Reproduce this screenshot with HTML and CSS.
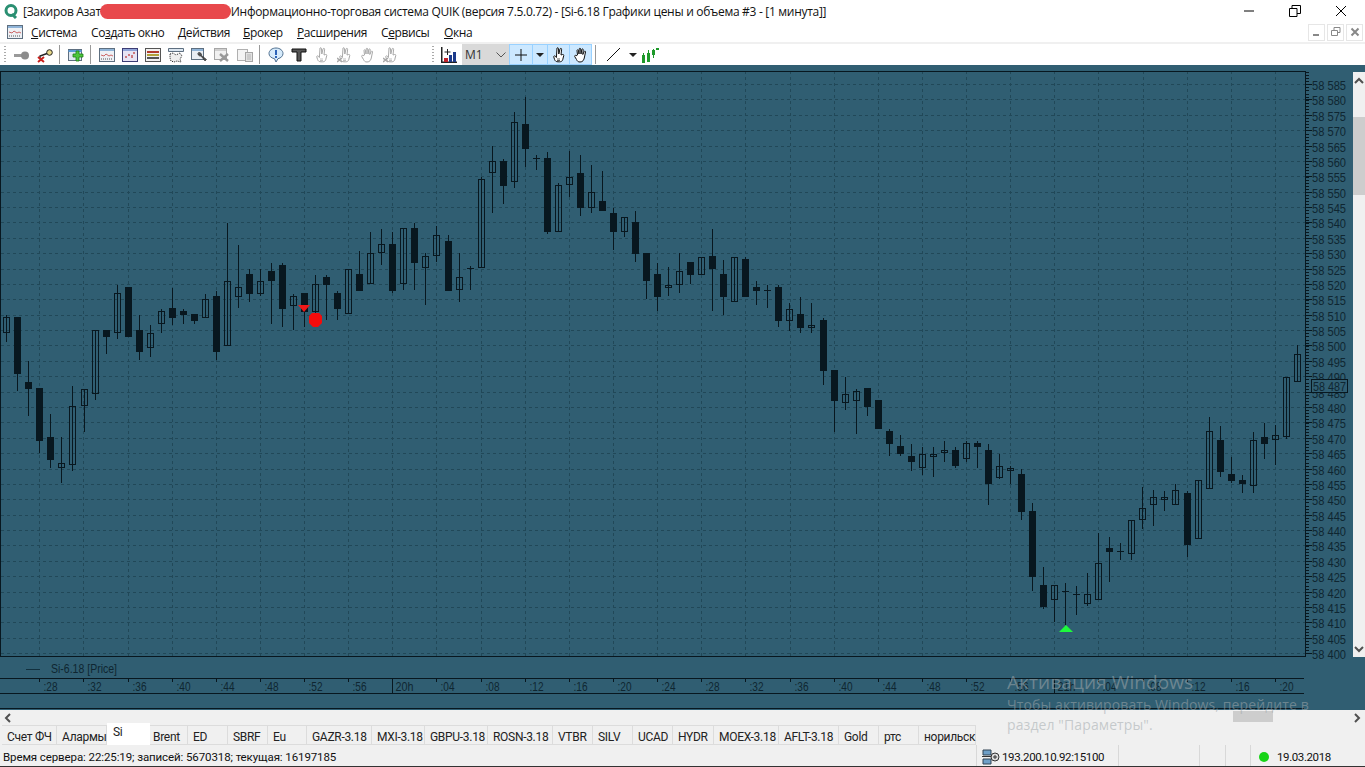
FILE: index.html
```html
<!DOCTYPE html>
<html lang="ru">
<head>
    <meta charset="UTF-8">
    <title>QUIK - Si-6.18 Графики цены и объема</title>
    <link rel="stylesheet" href="styles.css">
</head>
<body>
    <svg class="icon-defs" width="0" height="0">
        <symbol id="i-key" viewBox="0 0 16 16">
            <path d="M0 7h8v3H0z" fill="#9a9a9a"/><circle cx="11" cy="8.5" r="4" fill="#8c8c8c"/>
        </symbol>
        <symbol id="i-key-x" viewBox="0 0 16 16">
            <circle cx="12.500" cy="5.500" r="2.800" fill="#e8d98a" stroke="#222"/>
            <path d="M10 6.500 3 9v2" fill="none" stroke="#222" stroke-width="1.400"/>
            <path d="M1 10l6 5M7 10l-6 5" stroke="#c9201c" stroke-width="2"/>
        </symbol>
        <symbol id="i-add" viewBox="0 0 16 16">
            <rect x=".5" y="2.500" width="13" height="11" fill="#dfe8f2" stroke="#5e6f80"/>
            <path d="M.5 3h13v2H.5z" fill="#5a9bd8"/>
            <path d="M8 4h3v3h4v3h-4v4H8v-4H5V7h3z" fill="#4cc63c" stroke="#1c7d18" stroke-width=".8"/>
        </symbol>
        <symbol id="i-win-chart" viewBox="0 0 16 16">
            <rect x=".5" y="1.500" width="15" height="13" fill="#eef1f5" stroke="#5e6f80"/>
            <path d="M1 2h14v2H1z" fill="#8fb4d8"/>
            <path d="M2 8l3 1 2-2 3 2 2-1 2 1" fill="none" stroke="#c66"/>
            <path d="M2 12h12" stroke="#555" stroke-dasharray="1 1"/>
        </symbol>
        <symbol id="i-win-dots" viewBox="0 0 16 16">
            <rect x=".5" y="1.500" width="15" height="13" fill="#e7e4f3" stroke="#3d3d74"/>
            <path d="M1 2h14v2H1z" fill="#8fa4d8"/>
            <path d="M4 11V9M7 9V7M10 11V8M12 7V5" stroke="#b33" stroke-width="1.200"/>
        </symbol>
        <symbol id="i-win-list" viewBox="0 0 16 16">
            <rect x=".5" y="1.500" width="15" height="13" fill="#f2f2f2" stroke="#555"/>
            <path d="M2 4h12v2H2z" fill="#b23b2e"/><path d="M2 7h12v2H2z" fill="#b2a23b"/><path d="M2 10h12v2H2z" fill="#555"/>
        </symbol>
        <symbol id="i-win-map" viewBox="0 0 16 16">
            <path d="M.5 1.500h15v3H.5z" fill="#dbe6f0" stroke="#5e6f80"/>
            <path d="M2 7l3-1 3 2 4-2 2 3-2 3 1 3-4-1-3 1-3-1-1-3z" fill="#eee" stroke="#222" stroke-dasharray="1 1"/>
        </symbol>
        <symbol id="i-win-tool" viewBox="0 0 16 16">
            <rect x=".5" y="1.500" width="12" height="11" fill="#e9eef4" stroke="#5e6f80"/>
            <path d="M1 2h11v2H1z" fill="#8fb4d8"/>
            <path d="M7 6a2.500 2.500 0 0 0 3 3l4 5 1.500-1.500-5-4a2.500 2.500 0 0 0-3-3l1.500 1.500-1 1z" fill="#555" stroke="#222" stroke-width=".6"/>
        </symbol>
        <symbol id="i-win-x" viewBox="0 0 16 16">
            <rect x=".5" y="1.500" width="12" height="11" fill="#f1f1f1" stroke="#a6a6a6"/>
            <path d="M1 2h11v2H1z" fill="#cfcfcf"/>
            <path d="M6 7l8 7M14 7l-8 7" stroke="#999" stroke-width="2.400"/>
        </symbol>
        <symbol id="i-win-copy" viewBox="0 0 16 16">
            <rect x=".5" y="2.500" width="10" height="11" fill="#f4f4f4" stroke="#b0b0b0"/>
            <rect x="8.500" y="5.500" width="7" height="9" fill="#e2e2e2" stroke="#a6a6a6"/>
            <path d="M10 8h4M10 10h4M10 12h4" stroke="#b5b5b5"/>
        </symbol>
        <symbol id="i-alert" viewBox="0 0 16 16">
            <path d="M8 1c4 0 7 2.500 7 5.500 0 2.500-2 4.500-5 5.200L8 15l-1.500-3.300C3 11 1 9 1 6.500 1 3.500 4 1 8 1z" fill="#d5eafb" stroke="#4f6f8f"/>
            <path d="M7 3h2v5H7zM7 9h2v2H7z" fill="#2a62b8"/>
        </symbol>
        <symbol id="i-text" viewBox="0 0 16 16">
            <path d="M1 2h14v3h-5v9H6V5H1z" fill="#555" stroke="#111"/>
        </symbol>
        <symbol id="i-hand" viewBox="0 0 16 16">
            <path d="M6 1c1-.6 1.500 0 1.500 1l.3 5 1.200-5c.3-1 1.700-.8 1.600.3L10 8l1.500-.5c1-.3 1.500.5 1.200 1.300l-1 4c-.5 1.400-1.500 2-3 2H7c-1.800 0-3-.8-3.500-2.500L2.800 10c-.3-1 1-1.700 1.600-.8l1 1.300z" fill="#fff" stroke="currentColor"/>
            <path d="M6 12h3M6 13.500h3" stroke="currentColor" stroke-width=".7"/>
        </symbol>
        <symbol id="i-palm" viewBox="0 0 16 16">
            <path d="M4.500 8 4 3.500c0-1 1.400-1 1.500 0L6 7l.2-5c0-1 1.500-1 1.500 0L8 7l.8-4.500c.2-1 1.500-.8 1.400.2L9.800 7.500l1.400-3c.4-.9 1.600-.4 1.300.5L11.500 10c-.5 3-1.600 5-4.500 5-2 0-2.800-1-3.500-2.500L1.700 9.500c-.4-1 .8-1.600 1.400-.8z" fill="#fff" stroke="currentColor"/>
        </symbol>
        <symbol id="i-hand-x" viewBox="0 0 16 16">
            <use href="#i-hand" width="16" height="16"/>
            <path d="M0 11l5 4M5 11l-5 4" stroke="currentColor" stroke-width="1.500"/>
        </symbol>
        <symbol id="i-bars" viewBox="0 0 16 16">
            <path d="M.75 0v15.250H16" fill="none" stroke="#222" stroke-width="1.500"/>
            <path d="M3 11h4v4H3z" fill="#c0222a"/><path d="M8 8h3v7H8z" fill="#1c3a8a"/><path d="M12 5h3v10h-3z" fill="#1c3a8a"/>
            <path d="M6.500 2v6M3.500 5h6" stroke="#222"/>
        </symbol>
        <symbol id="i-candles" viewBox="0 0 18 16">
            <path d="M0 8h3v8H0zM5 6h3v9H5zM10 3h3v5h-3zM14 1h3v2h-3z" fill="#1d9a2a"/>
            <path d="M1.500 6v10M6.500 3v12M11.500 2v9" stroke="#1d9a2a"/>
        </symbol>
    </svg>

    <header class="titlebar">
        <svg class="logo" width="16" height="16" viewBox="0 0 16 16">
            <circle cx="8" cy="7.500" r="5" fill="none" stroke="#2a8f72" stroke-width="3"/>
            <path d="M9 11l4 4" stroke="#2a8f72" stroke-width="3"/>
        </svg>
        <span class="title-text">[Закиров Азат</span>
        <span class="redacted"></span>
        <span class="title-text">Информационно-торговая система QUIK (версия 7.5.0.72) - [Si-6.18 Графики цены и объема #3 - [1 минута]]</span>
        <div class="win-controls">
            <svg width="12" height="12" viewBox="0 0 12 12"><path d="M1 6h10" stroke="#000"/></svg>
            <svg width="12" height="12" viewBox="0 0 12 12"><path d="M.5 3.500h7.500v8H.5zM3 3V.5h8.500v8H8" fill="none" stroke="#000"/></svg>
            <svg width="12" height="12" viewBox="0 0 12 12"><path d="M1 1l10 10M11 1 1 11" stroke="#000"/></svg>
        </div>
    </header>

    <nav class="menubar">
        <svg class="menu-icon" width="16" height="16"><use href="#i-win-chart"/></svg>
        <span class="menu-item m1"><u>С</u>истема</span>
        <span class="menu-item m2">Со<u>з</u>дать окно</span>
        <span class="menu-item m3"><u>Д</u>ействия</span>
        <span class="menu-item m4"><u>Б</u>рокер</span>
        <span class="menu-item m5"><u>Р</u>асширения</span>
        <span class="menu-item m6">С<u>е</u>рвисы</span>
        <span class="menu-item"><u>О</u>кна</span>
        <div class="mdi-controls">
            <span class="mdi-btn">
                <svg width="10" height="10" viewBox="0 0 10 10"><path d="M1 8h6" stroke="#888" stroke-width="2"/></svg>
            </span>
            <span class="mdi-btn">
                <svg width="10" height="10" viewBox="0 0 10 10"><path d="M.5 3.500h6v5h-6zM3 3V.5h6v5H7" fill="none" stroke="#888"/></svg>
            </span>
            <span class="mdi-btn">
                <svg width="10" height="10" viewBox="0 0 10 10"><path d="M1.500 1.500l7 7M8.500 1.500l-7 7" stroke="#888" stroke-width="2"/></svg>
            </span>
        </div>
    </nav>

    <div class="toolbar">
        <span class="grip"></span>
        <span class="tool"><svg width="16" height="16"><use href="#i-key"/></svg></span>
        <span class="tool"><svg width="16" height="16"><use href="#i-key-x"/></svg></span>
        <span class="sep"></span>
        <span class="tool"><svg width="16" height="16"><use href="#i-add"/></svg></span>
        <span class="sep"></span>
        <span class="tool"><svg width="16" height="16"><use href="#i-win-chart"/></svg></span>
        <span class="tool"><svg width="16" height="16"><use href="#i-win-dots"/></svg></span>
        <span class="tool"><svg width="16" height="16"><use href="#i-win-list"/></svg></span>
        <span class="tool"><svg width="16" height="16"><use href="#i-win-map"/></svg></span>
        <span class="tool"><svg width="16" height="16"><use href="#i-win-tool"/></svg></span>
        <span class="tool"><svg width="16" height="16"><use href="#i-win-x"/></svg></span>
        <span class="tool"><svg width="16" height="16"><use href="#i-win-copy"/></svg></span>
        <span class="sep"></span>
        <span class="tool"><svg width="16" height="16"><use href="#i-alert"/></svg></span>
        <span class="tool"><svg width="16" height="16"><use href="#i-text"/></svg></span>
        <span class="tool disabled"><svg width="16" height="16"><use href="#i-hand"/></svg></span>
        <span class="tool disabled"><svg width="16" height="16"><use href="#i-hand-x"/></svg></span>
        <span class="tool disabled"><svg width="16" height="16"><use href="#i-palm"/></svg></span>
        <span class="tool disabled"><svg width="16" height="16"><use href="#i-hand-x"/></svg></span>
        <span class="grip grip-second"></span>
        <span class="tool"><svg width="16" height="16"><use href="#i-bars"/></svg></span>
        <span class="combo">M1
            <svg width="10" height="6" viewBox="0 0 10 6"><path d="M.5 .5 5 5 9.500 .5" fill="none" stroke="#555"/></svg>
        </span>
        <span class="tool on wide">
            <svg width="12" height="12" viewBox="0 0 12 12"><path d="M6 0v12M0 6h12" stroke="#111"/></svg>
        </span>
        <span class="tool on arrow"><span class="caret"></span></span>
        <span class="tool on"><svg width="16" height="16"><use href="#i-hand"/></svg></span>
        <span class="tool on"><svg width="16" height="16"><use href="#i-palm"/></svg></span>
        <span class="sep"></span>
        <span class="tool line-tool">
            <svg width="15" height="15" viewBox="0 0 15 15"><path d="M1 14 14 1" stroke="#111"/></svg>
        </span>
        <span class="tool arrow narrow"><span class="caret"></span></span>
        <span class="tool"><svg width="18" height="16"><use href="#i-candles"/></svg></span>
    </div>

    <main class="workspace">
        <svg id="chart" class="chart" width="1353" height="645" viewBox="0 65 1353 645"></svg>
        <div class="vscroll">
            <svg class="v-arrow" width="12" height="8" viewBox="0 0 12 8"><path d="M2 6l4-4 4 4" fill="none" stroke="#505050" stroke-width="2"/></svg>
            <span class="v-thumb"></span>
            <svg class="v-arrow" width="12" height="8" viewBox="0 0 12 8"><path d="M2 2l4 4 4-4" fill="none" stroke="#505050" stroke-width="2"/></svg>
        </div>
    </main>

    <div class="hscroll">
        <svg width="8" height="12" viewBox="0 0 8 12"><path d="M6 2 2 6l4 4" fill="none" stroke="#505050" stroke-width="2"/></svg>
        <span class="h-thumb"></span>
        <svg width="8" height="12" viewBox="0 0 8 12"><path d="M2 2l4 4-4 4" fill="none" stroke="#505050" stroke-width="2"/></svg>
    </div>

    <div class="tabs">
        <span class="tab">Счет ФЧ</span>
        <span class="tab">Алармы</span>
        <span class="tab active">Si</span>
        <span class="tab">Brent</span>
        <span class="tab">ED</span>
        <span class="tab">SBRF</span>
        <span class="tab">Eu</span>
        <span class="tab">GAZR-3.18</span>
        <span class="tab">MXI-3.18</span>
        <span class="tab">GBPU-3.18</span>
        <span class="tab">ROSN-3.18</span>
        <span class="tab">VTBR</span>
        <span class="tab">SILV</span>
        <span class="tab">UCAD</span>
        <span class="tab">HYDR</span>
        <span class="tab">MOEX-3.18</span>
        <span class="tab">AFLT-3.18</span>
        <span class="tab">Gold</span>
        <span class="tab">ртс</span>
        <span class="tab">норильск</span>
    </div>

    <footer class="statusbar">
        <span class="st-main">Время сервера: 22:25:19; записей: 5670318; текущая: 16197185</span>
        <span class="st-conn">
            <svg width="18" height="16" viewBox="0 0 18 16">
                <path d="M1 1h8v5H1z" fill="#6fa0c8" stroke="#345"/><path d="M1 10h8v5H1z" fill="#6fa0c8" stroke="#345"/>
                <path d="M0 7.500h10" stroke="#333"/><circle cx="13" cy="8" r="4" fill="#ddd" stroke="#333"/>
                <path d="M11 8h4M13 6v4" stroke="#333"/>
            </svg>
            193.200.10.92:15100
        </span>
        <span class="st-cell w81"></span>
        <span class="st-cell w26"></span>
        <span class="st-date"><span class="led"></span>19.03.2018</span>
    </footer>

    <div class="activation">
        <div class="act-title">Активация Windows</div>
        <div>Чтобы активировать Windows, перейдите в</div>
        <div>раздел "Параметры".</div>
    </div>

    <script src="chart.js"></script>
</body>
</html>
```

FILE: styles.css
```css
* {
    box-sizing: border-box;
}
html, body {
    margin: 0;
    height: 767px;
    overflow: hidden;
}
body {
    position: relative;
    font-family: "Open Sans", "Liberation Sans", sans-serif;
    font-size: 12px;
    color: #111;
    background: #f0f0f0;
}
.icon-defs {
    position: absolute;
}
svg {
    display: block;
}

.titlebar {
    display: flex;
    align-items: center;
    height: 22px;
    padding-left: 3px;
    background: #fff;
}
.logo {
    margin-right: 4px;
}
.title-text {
    white-space: nowrap;
    letter-spacing: -0.3px;
}
.redacted {
    width: 131px;
    height: 15px;
    margin-left: -1px;
    border-radius: 8px;
    background: #e8484c;
}
.win-controls {
    display: flex;
    gap: 34px;
    margin-left: auto;
    margin-right: 18px;
}

.menubar {
    display: flex;
    align-items: center;
    height: 20px;
    padding-left: 7px;
    background: #fff;
}
.menu-icon {
    margin-right: 8px;
}
.menu-item {
    white-space: nowrap;
    letter-spacing: -0.4px;
}
.m1 { width: 60px; }
.m2 { width: 87px; }
.m3 { width: 65px; }
.m4 { width: 54px; }
.m5 { width: 84px; }
.m6 { width: 63px; }
.mdi-controls {
    display: flex;
    gap: 2px;
    margin-left: auto;
    margin-right: 2px;
}
.mdi-btn {
    display: flex;
    align-items: center;
    justify-content: center;
    width: 17px;
    height: 17px;
    border: 1px solid #e6e6e6;
}

.toolbar {
    display: flex;
    align-items: center;
    height: 23px;
    padding-left: 4px;
    background: #fff;
    border-top: 2px solid #f0f0f0;
}
.grip {
    width: 2px;
    height: 17px;
    margin-right: 4px;
    background: repeating-linear-gradient(#aaa 0 1px, transparent 1px 3px);
}
.grip-second {
    margin: 0 3px 0 30px;
}
.tool {
    display: flex;
    align-items: center;
    justify-content: center;
    flex: none;
    width: 23px;
    height: 21px;
}
.tool.disabled {
    color: #a8a8a8;
}
.tool.on {
    background: #cce8ff;
    border: 1px solid #99d1ff;
    margin-left: -1px;
    color: #111;
}
.tool.wide {
    width: 24px;
    margin-left: 0;
}
.tool.arrow {
    width: 16px;
}
.tool.arrow.narrow {
    width: 13px;
}
.tool.line-tool {
    width: 26px;
}
.caret {
    width: 0;
    height: 0;
    border-left: 4px solid transparent;
    border-right: 4px solid transparent;
    border-top: 4px solid #222;
}
.sep {
    flex: none;
    width: 1px;
    height: 19px;
    margin: 0 4px 0 3px;
    background: #999;
}
.combo {
    display: flex;
    align-items: center;
    justify-content: space-between;
    flex: none;
    width: 47px;
    height: 21px;
    margin-left: 2px;
    padding: 0 3px;
    background: #d9d9d9;
    color: #333;
}

.workspace {
    display: flex;
    height: 645px;
    background: #305e72;
}
.chart {
    flex: none;
}
.chart text {
    font-family: "Liberation Sans", sans-serif;
    font-size: 13px;
    fill: #0f2631;
}
.chart .blob {
    filter: blur(0.6px);
}
.vscroll {
    display: flex;
    flex-direction: column;
    align-items: center;
    justify-content: space-between;
    width: 12px;
    height: 585px;
    margin-top: 7px;
    padding: 5px 0 4px;
    background: #f0f0f0;
    position: relative;
}
.v-thumb {
    position: absolute;
    top: 45px;
    left: 0;
    width: 12px;
    height: 78px;
    background: #cdcdcd;
}

.hscroll {
    display: flex;
    align-items: center;
    justify-content: space-between;
    position: relative;
    height: 15px;
    padding: 0 4px;
}
.h-thumb {
    position: absolute;
    left: 1233px;
    top: 1px;
    width: 40px;
    height: 11px;
    background: #cdcdcd;
}

.tabs {
    display: grid;
    grid-template-columns: 55px 50px 43px 38px 40px 40px 39px 65px 53px 63px 65px 40px 40px 40px 41px 65px 60px 40px 40px 57px;
    height: 20px;
    margin-left: 2px;
    width: 974px;
}
.tab {
    display: flex;
    align-items: center;
    padding: 3px 0 0 5px;
    border: 1px solid #dcdcdc;
    border-left: none;
    white-space: nowrap;
    font-family: Roboto, "Liberation Sans", sans-serif;
    font-size: 12px;
    letter-spacing: -0.3px;
    color: #222;
}
.tab.active {
    height: 22px;
    margin-top: -2px;
    padding: 0 0 4px 6px;
    background: #fff;
    border: none;
}
.tab.active + .tab {
    padding-left: 3px;
}

.statusbar {
    display: flex;
    align-items: center;
    height: 22px;
    border-bottom: 1px solid #333;
    background: #f0f0f0;
    font-family: Roboto, "Liberation Sans", sans-serif;
    font-size: 11.5px;
}
.statusbar > span {
    height: 100%;
    display: flex;
    align-items: center;
    padding-top: 2px;
    border-right: 1px solid #d8d8d8;
}
.st-main {
    width: 977px;
    padding-left: 3px;
    letter-spacing: -0.1px;
}
.st-conn {
    width: 142px;
    padding-left: 5px;
    gap: 2px;
    letter-spacing: -0.35px;
}
.w81 { width: 81px; }
.w26 { width: 26px; }
.st-date {
    flex: 1;
    margin-left: 24px;
    padding-left: 8px;
    gap: 8px;
    border-right: none !important;
    border-left: 1px solid #d8d8d8;
    letter-spacing: -0.4px;
}
.led {
    width: 10px;
    height: 10px;
    border-radius: 50%;
    background: #17d417;
}

/* watermark lies over everything */
.activation {
    position: absolute;
    left: 1007px;
    top: 670px;
    font-size: 14px;
    line-height: 20px;
    letter-spacing: 0.1px;
    color: rgba(160, 168, 172, 0.55);
    pointer-events: none;
}
.act-title {
    font-size: 19px;
    line-height: 24px;
    margin-bottom: 1px;
}
```

FILE: chart.js
```js
// candles: [high, body top, body bottom, low, kind]  f = filled, h = hollow, d = doji
// numbers are read off 3x crops, so each block has its own top y
const blocks = [
    { top: 230, rows: [
        [255,262,310,335,"h"],[262,262,431,482,"f"],[393,457,476,557,"f"],[475,475,632,670,"f"],
        [552,622,689,715,"f"],[622,698,715,758,"h"],[468,529,706,722,"h"],[476,476,529,605,"h"],
        [301,301,493,509,"h"],[301,301,320,373,"f"],[165,190,310,326,"h"],[172,172,320,320,"f"],
        [255,301,365,390,"f"],[285,310,355,382,"h"],[238,244,283,308,"h"],[175,235,263,285,"f"],
        [238,243,254,282,"f"],[253,253,272,282,"f"],[192,208,263,263,"h"],[183,199,365,390,"f"],
        [-21,152,347,347,"h"],[46,172,200,234,"h"],[118,133,191,216,"f"],[118,152,191,197,"h"],
        [99,124,152,282,"f"],[99,106,236,290,"f"],[192,199,227,300,"h"],[190,190,245,290,"f"],
        [135,163,245,260,"h"],[136,142,164,270,"f"],[183,190,236,270,"f"]
    ] },
    { top: 90, rows: [
        [536,536,673,673,"h"],[484,553,602,602,"f"],[427,490,583,583,"h"],[417,463,490,526,"h"],
        [427,463,602,610,"f"],[415,415,583,600,"h"],[398,415,518,600,"f"],[490,499,535,645,"h"],
        [408,434,499,516,"h"],[436,454,602,602,"f"],[490,562,601,636,"h"],[528,535,535,600,"d"],
        [260,268,535,535,"h"],[168,214,250,368,"h"],[208,214,287,342,"f"],[67,95,277,293,"h"],
        [20,102,176,232,"f"],[196,205,205,240,"d"],[186,205,426,432,"f"],[280,286,425,425,"h"],
        [184,260,286,322,"h"],[195,250,353,378,"f"],[225,305,353,370,"h"],[242,334,362,362,"f"],
        [354,370,426,480,"f"],[380,380,425,440,"h"],[364,397,491,516,"f"]
    ] },
    { top: 220, rows: [
        [99,99,183,237,"f"],[128,163,230,273,"f"],[140,194,202,228,"h"],[100,154,194,219,"h"],
        [127,127,164,192,"f"],[110,110,164,164,"h"],[28,109,146,272,"f"],[120,163,230,284,"f"],
        [110,110,247,247,"h"],[112,118,230,230,"f"],[184,201,212,255,"f"],[195,211,211,264,"d"],
        [196,202,302,320,"f"],[250,266,302,332,"h"],[232,283,323,338,"f"],[250,314,322,338,"h"],
        [295,301,452,495,"f"],[451,451,542,637,"f"],[472,523,550,570,"h"],[507,514,542,642,"h"],
        [505,505,560,587,"f"],[541,541,626,626,"f"],[628,634,671,707,"f"],[645,679,701,707,"f"],
        [672,709,727,752,"f"],[682,701,745,765,"h"],[680,701,709,771,"h"],[664,691,700,725,"h"],
        [682,691,737,743,"f"]
    ] },
    { top: 340, rows: [
        [304,310,358,366,"h"],[304,310,320,384,"f"],[313,331,431,495,"f"],[341,377,413,418,"h"],
        [378,385,394,431,"h"],[386,402,515,540,"f"],[488,514,710,753,"f"],[681,736,800,806,"f"],
        [736,736,781,846,"h"],[728,754,754,855,"d"],[738,763,763,825,"d"],[699,763,791,798,"h"],
        [580,670,781,781,"h"],[592,625,635,726,"f"],[608,634,634,660,"d"],[541,541,643,660,"h"],
        [440,505,541,568,"h"],[450,470,496,558,"h"],[452,470,478,513,"h"],[432,449,496,496,"h"],
        [452,460,616,652,"f"],[421,421,598,598,"h"],[232,274,448,448,"h"],[258,300,395,410,"f"],
        [350,403,422,428,"f"],[404,421,431,460,"f"],[277,301,439,459,"h"],[248,292,311,357,"f"],
        [256,284,301,375,"h"],[110,110,292,298,"h"],[16,43,127,127,"h"]
    ] }
];

const INK = "#08171f";
const GRID = "#214858";
const BG = "#305e72";
const RIGHT = 1305;
const TOP = 71;
const BOTTOM = 656;

let out = "";

function line(x1, y1, x2, y2, color, extra) {
    out += `<line x1="${x1}" y1="${y1}" x2="${x2}" y2="${y2}" stroke="${color}" ${extra || ""}/>`;
}
function rect(x, y, w, h, fill, stroke) {
    out += `<rect x="${x}" y="${y}" width="${w}" height="${h}" fill="${fill}" stroke="${stroke || "none"}"/>`;
}
function label(x, y, w, text) {
    out += `<text x="${x}" y="${y}" textLength="${w}" lengthAdjust="spacingAndGlyphs">${text}</text>`;
}

// horizontal grid and price axis
const priceY = k => Math.round(84 + 15.38 * k) + 0.5;
for (let k = 0; k <= 37; k++) {
    const y = priceY(k);
    if (y < BOTTOM) line(1, y, RIGHT, y, GRID, 'stroke-dasharray="3 3"');
    line(RIGHT, y, RIGHT + 7, y, INK);
    label(1312, y + 5, 34, "58 " + (585 - k * 5));
}
for (let y = 72; y < BOTTOM; y += 3.075) {
    line(RIGHT, Math.round(y) + 0.5, RIGHT + 4, Math.round(y) + 0.5, INK);
}

// vertical grid and time axis
const times = [":28",":32",":36",":40",":44",":48",":52",":56","20h",":04",":08",":12",":16",":20",":24",
    ":28",":32",":36",":40",":44",":48",":52",":56","21h",":04",":08",":12",":16",":20"];
times.forEach((t, k) => {
    const x = Math.round(39.3 + 44.13 * k) + 0.5;
    line(x, TOP, x, BOTTOM, GRID, 'stroke-dasharray="3 3"');
    const hour = t.endsWith("h");
    line(x, 678, x, hour ? 693 : 682, INK);
    label(x + (hour ? 3 : 4), 691, hour ? 18 : 14, t);
});

// frames
rect(0.5, TOP + 0.5, RIGHT, BOTTOM - TOP, "none", INK);
line(0, 678.5, 1304, 678.5, INK);
line(0, 693.5, 1304, 693.5, INK);
line(0, 708.5, 1304, 708.5, INK);

// legend
line(26, 669.5, 40, 669.5, "#12303e");
label(51, 673, 66, "Si-6.18 [Price]");

// candles
let i = 0;
blocks.forEach(block => {
    block.rows.forEach(row => {
        const px = Math.round(6.3 + 11.03 * i);
        const [hi, a, b, lo] = row.slice(0, 4).map(z => Math.round(block.top + z / 3));
        const kind = row[4];
        line(px + 0.5, hi, px + 0.5, lo, INK);
        if (kind === "f") rect(px - 3, a, 7, Math.max(b - a, 2), INK);
        if (kind === "h") rect(px - 2.5, a + 0.5, 6, Math.max(b - a - 1, 2), "none", INK);
        if (kind === "d") line(px - 3, a + 0.5, px + 4, a + 0.5, INK);
        i++;
    });
});

// signal marks
out += '<path class="blob" d="M298 305h12l-6 7z" fill="#f01818"/>';
out += '<path class="blob" d="M312 313h7l3 3v7l-4 4h-5l-4-4v-7z" fill="#f40c0c"/>';
out += '<path d="M1066 625l7 7h-14z" fill="#1dfb3c"/>';

// last price box
rect(1311.5, 379.5, 36, 13, BG, INK);
label(1313, 391, 33, "58 487");

document.getElementById("chart").innerHTML = out;
```
